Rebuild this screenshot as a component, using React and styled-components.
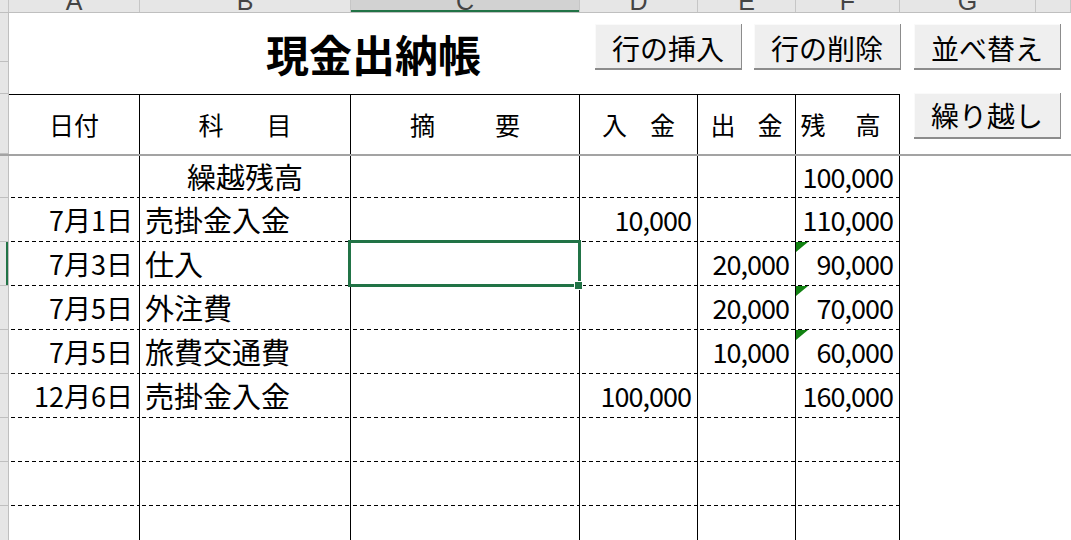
import React from "react";
import styled, { createGlobalStyle } from "styled-components";

const GREEN = "#217346";
const COLS = "9px 131px 211px 229px 118px 98px 104px 136px 1fr";
const JP = `"Noto Sans CJK JP", "Noto Sans", sans-serif`;

const GlobalStyle = createGlobalStyle`
  html, body {
    margin: 0;
    padding: 0;
    background: #fff;
  }
  body {
    font-family: ${JP};
    color: #000;
  }
`;

const Sheet = styled.div`
  position: relative;
  width: 1071px;
  height: 540px;
  overflow: hidden;
  background: #fff;
`;

const Row = styled.div`
  display: grid;
  grid-template-columns: ${COLS};
  height: ${({ $h }) => $h}px;
  box-sizing: border-box;
`;

const ColHeadRow = styled(Row)`
  background: #e6e6e6;
  border-bottom: 1px solid #bfbfbf;
`;

// column letters sit mostly above the visible top edge, as in the scrolled sheet
const ColHead = styled.div`
  display: flex;
  justify-content: center;
  align-items: flex-end;
  overflow: hidden;
  border-right: 1px solid #c6c6c6;
  background: ${({ $sel }) => ($sel ? "#d2d2d2" : "#e6e6e6")};
  box-shadow: ${({ $sel }) => ($sel ? `inset 0 -2px 0 ${GREEN}` : "none")};
  font-family: "Liberation Sans", Arial, sans-serif;
  font-size: 25px;
  line-height: 1;
  color: #444;

  span {
    margin-bottom: -2px;
  }
`;

const TitleBlock = styled.div`
  display: grid;
  grid-template-columns: ${COLS};
  grid-template-rows: 49px 32px;
`;

const RowHead = styled.div`
  box-sizing: border-box;
  background: #e6e6e6;
  border-right: 1px solid #bfbfbf;
  border-bottom: 1px solid #bfbfbf;
  box-shadow: ${({ $sel }) => ($sel ? `inset -2px 0 0 ${GREEN}` : "none")};
`;

const Title = styled.div`
  grid-column: 2 / 8;
  grid-row: 1 / 3;
  display: flex;
  align-items: center;
  padding-left: 257px;
  font-size: 43px;
  font-weight: 700;
  line-height: 1;
`;

const HeadRow = styled(Row)`
  border-bottom: 2px solid #a3a3a3;
`;

const HeadCell = styled.div`
  display: flex;
  justify-content: center;
  align-items: center;
  gap: ${({ $gap }) => $gap}px;
  padding-right: ${({ $pr }) => $pr || 0}px;
  border-top: 1px solid #000;
  border-right: 1px solid #000;
  font-size: 25px;
  line-height: 1;
`;

const Cell = styled.div`
  position: relative;
  box-sizing: border-box;
  display: flex;
  align-items: center;
  justify-content: ${({ $align }) =>
    $align === "right" ? "flex-end" : $align === "center" ? "center" : "flex-start"};
  padding: 0 ${({ $align }) => ($align === "right" ? "6px" : "0")} 1px
    ${({ $align }) => ($align === "left" ? "5px" : "0")};
  border-right: 1px solid #000;
  background-image: linear-gradient(to right, #000 4px, transparent 4px);
  background-size: 7px 1px;
  background-repeat: repeat-x;
  background-position: 2px bottom;
  font-size: ${({ $size }) => $size || 27}px;
  line-height: 1;
  letter-spacing: ${({ $num }) => ($num ? "-1px" : "0")};
  white-space: nowrap;

  &::before {
    content: "";
    display: ${({ $flag }) => ($flag ? "block" : "none")};
    position: absolute;
    top: 0;
    left: 0;
    border-top: 10px solid #128212;
    border-right: 12px solid transparent;
  }
`;

const Blank = styled.div``;

const Selection = styled.div`
  position: absolute;
  top: -2px;
  left: -3px;
  right: -2px;
  bottom: -1px;
  border: 3px solid ${GREEN};
  z-index: 2;
  pointer-events: none;
`;

const FillHandle = styled.div`
  position: absolute;
  right: -5px;
  bottom: -6px;
  width: 7px;
  height: 7px;
  background: ${GREEN};
  border: 1px solid #fff;
`;

const MacroButton = styled.button`
  position: absolute;
  left: ${({ $x }) => $x}px;
  top: ${({ $y }) => $y}px;
  width: 147px;
  height: 46px;
  box-sizing: border-box;
  padding: ${({ $y }) => ($y < 50 ? "3px" : "0")} 0 0;
  background: #efefef;
  border: none;
  border-right: 1px solid #8c8c8c;
  border-bottom: 2px solid #8c8c8c;
  box-shadow: inset 1px 1px 0 #fafafa;
  font-family: ${JP};
  font-size: 28px;
  line-height: 1;
  color: #000;
`;

const letters = ["", "A", "B", "C", "D", "E", "F", "G", ""];

const heads = [
  { chars: ["日", "付"], gap: 0 },
  { chars: ["科", "目"], gap: 43 },
  { chars: ["摘", "要"], gap: 60 },
  { chars: ["入", "金"], gap: 23 },
  { chars: ["出", "金"], gap: 22 },
  { chars: ["残", "高"], gap: 30, pr: 14 },
];

const rows = [
  { subj: "繰越残高", center: true, bal: "100,000" },
  { date: "7月1日", subj: "売掛金入金", inc: "10,000", bal: "110,000" },
  { date: "7月3日", subj: "仕入", out: "20,000", bal: "90,000", flag: true, sel: true },
  { date: "7月5日", subj: "外注費", out: "20,000", bal: "70,000", flag: true },
  { date: "7月5日", subj: "旅費交通費", out: "10,000", bal: "60,000", flag: true },
  { date: "12月6日", subj: "売掛金入金", inc: "100,000", bal: "160,000" },
  {},
  {},
  {},
];

const buttons = [
  { label: "行の挿入", x: 595, y: 24 },
  { label: "行の削除", x: 754, y: 24 },
  { label: "並べ替え", x: 914, y: 24 },
  { label: "繰り越し", x: 914, y: 93 },
];

export default function App() {
  return (
    <>
      <GlobalStyle />
      <Sheet>
        <ColHeadRow $h={13}>
          {letters.map((l, i) => (
            <ColHead key={i} $sel={l === "C"}>
              <span>{l}</span>
            </ColHead>
          ))}
        </ColHeadRow>

        <TitleBlock>
          <RowHead style={{ gridColumn: 1, gridRow: 1 }} />
          <RowHead style={{ gridColumn: 1, gridRow: 2 }} />
          <Title>現金出納帳</Title>
        </TitleBlock>

        <HeadRow $h={62}>
          <RowHead />
          {heads.map((h, i) => (
            <HeadCell key={i} $gap={h.gap} $pr={h.pr}>
              {h.chars.map((c) => (
                <span key={c}>{c}</span>
              ))}
            </HeadCell>
          ))}
          <Blank />
          <Blank />
        </HeadRow>

        {rows.map((r, i) => (
          <Row key={i} $h={i === 0 ? 42 : 44}>
            <RowHead $sel={r.sel} />
            <Cell $align="right">{r.date}</Cell>
            <Cell $align={r.center ? "center" : "left"} $size={29}>
              {r.subj}
            </Cell>
            <Cell>
              {r.sel && (
                <Selection>
                  <FillHandle />
                </Selection>
              )}
            </Cell>
            <Cell $align="right" $num>
              {r.inc}
            </Cell>
            <Cell $align="right" $num>
              {r.out}
            </Cell>
            <Cell $align="right" $num $flag={r.flag}>
              {r.bal}
            </Cell>
            <Blank />
            <Blank />
          </Row>
        ))}

        {buttons.map((b) => (
          <MacroButton key={b.label} $x={b.x} $y={b.y}>
            {b.label}
          </MacroButton>
        ))}
      </Sheet>
    </>
  );
}
